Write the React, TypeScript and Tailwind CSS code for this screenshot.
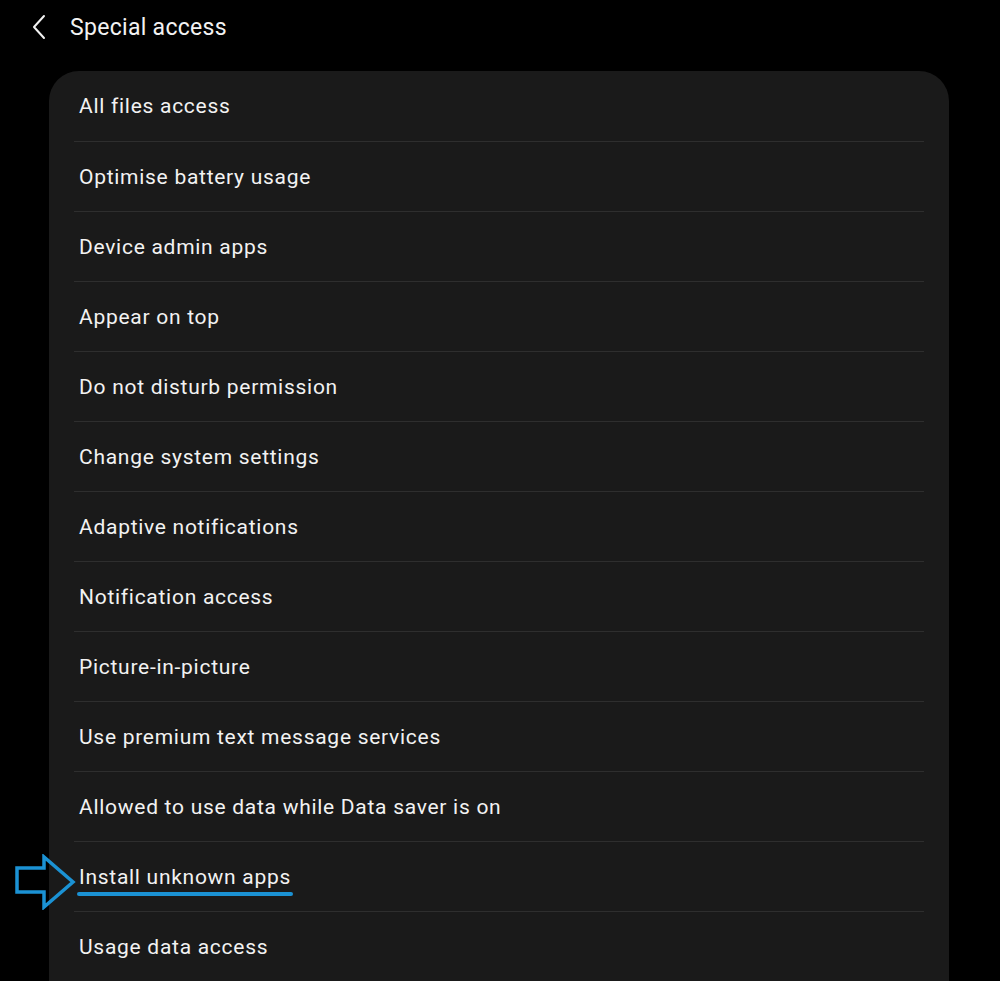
const items = [
  'All files access',
  'Optimise battery usage',
  'Device admin apps',
  'Appear on top',
  'Do not disturb permission',
  'Change system settings',
  'Adaptive notifications',
  'Notification access',
  'Picture-in-picture',
  'Use premium text message services',
  'Allowed to use data while Data saver is on',
  'Install unknown apps',
  'Usage data access',
]

export default function App() {
  return (
    <div
      className="h-[981px] overflow-hidden bg-black text-[#f2f2f2] relative"
      style={{ fontFamily: 'Roboto, "Noto Sans", sans-serif' }}
    >
      {/* Header */}
      <header className="flex items-center h-[54px] pl-[30px]">
        <svg className="w-[18px] h-[26px]" viewBox="0 0 18 26" fill="none">
          <path d="M14 2 L4 13 L14 24" stroke="#f2f2f2" strokeWidth={2} strokeLinecap="round" strokeLinejoin="round" />
        </svg>
        <h1 className="ml-[22px] text-[23px] leading-none tracking-[0.3px]">Special access</h1>
      </header>

      {/* List card */}
      <div className="mx-[49px] mt-[17px] w-[900px] rounded-t-[30px] bg-[#1a1a1a] px-[25px]">
        {items.map((label, i) => (
          <div
            key={label}
            className={`h-[70px] flex items-center pl-[5px] pt-[1px] ${i > 0 ? 'border-t border-[#2e2e2e]' : ''}`}
          >
            {label === 'Install unknown apps' ? (
              <span className="relative text-[21px] leading-none tracking-[0.72px]">
                {label}
                <span className="absolute left-[-2px] right-[-2px] top-[25px] h-[4px] rounded-full bg-[#1b92d4]" />
              </span>
            ) : (
              <span className="text-[21px] leading-none tracking-[0.72px]">{label}</span>
            )}
          </div>
        ))}
      </div>

      {/* Pointer arrow */}
      <svg className="absolute left-[14px] top-[854px] w-[64px] h-[56px]" viewBox="0 0 64 56" fill="none">
        <path
          d="M3 14 H30 V3 L59 28 L30 53 V38 H3 Z"
          stroke="#1b92d4"
          strokeWidth={3.5}
          strokeLinejoin="miter"
        />
      </svg>
    </div>
  )
}
